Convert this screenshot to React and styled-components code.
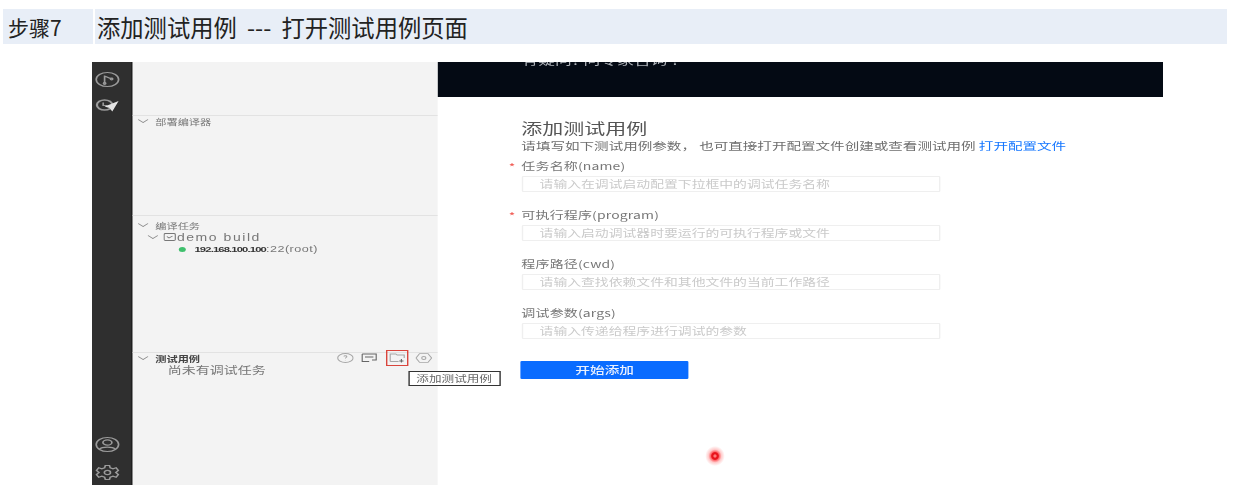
import React from "react";
import styled, { createGlobalStyle } from "styled-components";

const GlobalStyle = createGlobalStyle`
  html, body {
    margin: 0;
    padding: 0;
    background: #ffffff;
    overflow: hidden;
  }
  body {
    font-family: "Noto Sans CJK SC", "Noto Sans", sans-serif;
  }
`;

const Page = styled.div`
  width: 1233px;
  height: 499px;
  padding-top: 9px;
  box-sizing: border-box;
`;

const StepRow = styled.div`
  display: flex;
  gap: 2px;
  height: 35px;
  margin: 0 6px 18px 3px;
  color: #222;
`;

const StepCell = styled.div`
  background: #e8eef7;
  display: flex;
  align-items: center;
  padding-left: ${(p) => p.$pad}px;
  width: ${(p) => (p.$w ? `${p.$w}px` : "auto")};
  flex: ${(p) => (p.$w ? "none" : "1")};
  font-size: ${(p) => p.$size}px;
  word-spacing: ${(p) => p.$words || 0}px;
  white-space: pre;
  box-sizing: border-box;
`;

/* the shot in the reference is stretched sideways, so lay it out at its own size and stretch it */
const Shot = styled.div`
  display: flex;
  width: 765px;
  height: 423px;
  margin-left: 92px;
  transform: scaleX(1.4);
  transform-origin: 0 0;
  filter: blur(0.5px);
  overflow: hidden;
`;

const Rail = styled.div`
  width: 29.2px;
  flex: none;
  background: #2f2f2f;
  border-right: 1px solid #1c1c1c;
  box-sizing: border-box;
  display: flex;
  flex-direction: column;
  align-items: center;
  padding: 9px 7px 4px 0;
  color: #9a9a9a;
`;

const RailSpacer = styled.div`
  flex: 1;
`;

const RailIcon = styled.svg`
  width: 18px;
  height: ${(p) => p.$h || 17}px;
  margin-bottom: ${(p) => p.$gap || 0}px;
  flex: none;
  fill: none;
  stroke: currentColor;
  stroke-width: 1.2;
`;

const Panel = styled.aside`
  position: relative;
  width: 217.5px;
  flex: none;
  background: #f3f3f3;
  display: flex;
  flex-direction: column;
`;

const PanelSection = styled.section`
  height: ${(p) => p.$h}px;
  flex: ${(p) => (p.$h ? "none" : "1")};
  border-bottom: ${(p) => (p.$last ? "none" : "1px solid #e2e2e2")};
  box-sizing: border-box;
  padding-top: ${(p) => p.$top || 0}px;
`;

const SectionHead = styled.div`
  display: flex;
  align-items: center;
  height: 10px;
  margin-bottom: ${(p) => (p.$tight ? 1 : 2)}px;
  padding-left: 3px;
  font-size: 8px;
  font-weight: ${(p) => (p.$strong ? 700 : 400)};
  color: ${(p) => (p.$strong ? "#444" : "#777")};
`;

const Chevron = styled.svg`
  width: 9px;
  height: 6px;
  margin-right: 4px;
  flex: none;
  fill: none;
  stroke: #8a8a8a;
  stroke-width: 0.8;
`;

const TreeRow = styled.div`
  display: flex;
  align-items: center;
  height: 12px;
  padding-left: ${(p) => p.$indent}px;
  font-size: 10px;
  color: #777;
  font-family: "Liberation Sans", sans-serif;
  white-space: nowrap;
`;

const BuildLabel = styled.span`
  letter-spacing: 1.1px;
`;

const BuildIcon = styled.svg`
  width: 9px;
  height: 8px;
  margin-left: -1.5px;
  margin-right: 1px;
  fill: none;
  stroke: #777;
  stroke-width: 0.8;
`;

const StatusDot = styled.span`
  width: 5px;
  height: 5px;
  border-radius: 50%;
  background: #3fc06d;
  margin-right: 6px;
`;

const Host = styled.span`
  font-size: 8px;
  font-weight: 700;
  letter-spacing: -0.6px;
  color: #333;
`;

const HostPort = styled.span`
  font-size: 9px;
  letter-spacing: 0.35px;
  color: #777;
`;

const EmptyHint = styled.div`
  padding-left: 25px;
  height: 10px;
  line-height: 10px;
  font-size: 10px;
  color: #777;
`;

const HeadTools = styled.div`
  margin-left: auto;
  display: flex;
  align-items: center;
  color: #a6a6a6;
  padding-right: 4px;
`;

const ToolIcon = styled.svg`
  width: 12px;
  height: 10px;
  margin-left: ${(p) => p.$gap || 0}px;
  fill: none;
  stroke: ${(p) => (p.$dark ? "#666" : "currentColor")};
  stroke-width: 0.8;
`;

const ToolFocus = styled.div`
  width: 16px;
  height: 16px;
  margin-left: 5.5px;
  margin-right: 3px;
  border: 1px solid #d9453c;
  box-sizing: border-box;
  display: flex;
  align-items: center;
  justify-content: center;
`;

const Tooltip = styled.div`
  position: absolute;
  left: 196.5px;
  top: 309px;
  width: 66px;
  height: 15px;
  border: 1px solid #333;
  background: #fff;
  box-sizing: border-box;
  font-size: 9px;
  line-height: 13px;
  text-align: center;
  color: #666;
  white-space: nowrap;
  z-index: 2;
`;

const Main = styled.main`
  position: relative;
  flex: 1;
  min-width: 0;
  background: #fff;
`;

const Banner = styled.div`
  height: 35px;
  background: #040a14;
  overflow: hidden;
  padding-left: 60px;
  color: #aeb2b8;
  font-size: 12px;
  line-height: 14px;
`;

const BannerText = styled.div`
  margin-top: -9px;
`;

const Form = styled.div`
  padding: 22px 0 0 60px;
`;

const FormTitle = styled.h2`
  margin: 0 0 2px;
  font-size: 15px;
  line-height: 18px;
  font-weight: 400;
  color: #555;
`;

const FormIntro = styled.p`
  margin: 0 0 7px;
  font-size: 10.4px;
  line-height: 14px;
  color: #6e6e6e;
  white-space: nowrap;
`;

const OpenLink = styled.a`
  color: #1677ff;
`;

const Fields = styled.div`
  display: flex;
  flex-direction: column;
  gap: 17px;
`;

const Field = styled.div`
  display: flex;
  flex-direction: column;
  gap: 4px;
  width: 299px;
`;

const FieldLabel = styled.label`
  position: relative;
  font-size: 10px;
  line-height: 12px;
  color: #777;
  letter-spacing: 0.1px;
  white-space: nowrap;
`;

const Required = styled.span`
  position: absolute;
  left: -9px;
  top: 1px;
  color: #f0524a;
`;

const FieldInput = styled.div`
  height: 16px;
  border: 1px solid #efefef;
  border-radius: 1px;
  box-sizing: border-box;
  padding-left: 12px;
  font-size: 9.9px;
  line-height: 14px;
  color: #cacaca;
  white-space: nowrap;
`;

const SubmitButton = styled.div`
  width: 120px;
  height: 18px;
  margin-top: 22px;
  margin-left: -0.5px;
  border-radius: 1px;
  background: #0a6cff;
  color: #e8f0ff;
  font-size: 10.5px;
  font-weight: 500;
  line-height: 18px;
  text-align: center;
`;

const PointerDot = styled.div`
  position: absolute;
  left: 191px;
  top: 384px;
  width: 14px;
  height: 20px;
  background: radial-gradient(closest-side, #ff7a7a 0 10%, #e8141c 22% 34%, #ff6a6e 44%, rgba(255, 140, 140, 0.45) 66%, rgba(255, 255, 255, 0) 100%);
`;

const fields = [
  { label: "任务名称(name)", hint: "请输入在调试启动配置下拉框中的调试任务名称", required: true },
  { label: "可执行程序(program)", hint: "请输入启动调试器时要运行的可执行程序或文件", required: true },
  { label: "程序路径(cwd)", hint: "请输入查找依赖文件和其他文件的当前工作路径" },
  { label: "调试参数(args)", hint: "请输入传递给程序进行调试的参数" },
];

const Caret = () => (
  <Chevron viewBox="0 0 9 6">
    <path d="M1 1.5 L4.5 4.5 L8 1.5" />
  </Chevron>
);

const App = () => {
  return (
    <Page>
      <GlobalStyle />
      <StepRow>
        <StepCell $w={90} $pad={5} $size={21}>步骤7</StepCell>
        <StepCell $pad={2} $size={23.3} $words={5}>添加测试用例 --- 打开测试用例页面</StepCell>
      </StepRow>

      <Shot>
        <Rail>
          <RailIcon viewBox="0 0 18 17" $gap={10}>
            <ellipse cx="9" cy="8.5" rx="8" ry="7" />
            <path d="M7 4.5 V12.5 M7 5 L12 8" />
            <circle cx="7" cy="12.5" r="0.8" />
            <circle cx="12" cy="8" r="0.8" />
          </RailIcon>
          <RailIcon viewBox="0 0 18 15" $h={15}>
            <ellipse cx="7" cy="7" rx="5.5" ry="5" strokeWidth="1.6" />
            <path d="M6 4.5 V7.5 H9" />
            <path d="M7 8.5 L17 3 L12.5 13.5 L10.5 10 Z" fill="#e4e4e4" stroke="none" />
          </RailIcon>
          <RailSpacer />
          <RailIcon viewBox="0 0 18 17" $gap={11}>
            <ellipse cx="9" cy="8.5" rx="8" ry="7" />
            <ellipse cx="9" cy="6.5" rx="3.2" ry="2.6" />
            <path d="M3.5 13 C5 10.5 13 10.5 14.5 13" />
          </RailIcon>
          <RailIcon viewBox="0 0 18 17">
            <path d="M7.5 1.5 H10.5 L11 3.8 L13 4.8 L15.2 3.8 L16.8 6.5 L15 8.5 L16.8 10.5 L15.2 13.2 L13 12.2 L11 13.2 L10.5 15.5 H7.5 L7 13.2 L5 12.2 L2.8 13.2 L1.2 10.5 L3 8.5 L1.2 6.5 L2.8 3.8 L5 4.8 L7 3.8 Z" />
            <circle cx="9" cy="8.5" r="2.2" />
          </RailIcon>
        </Rail>

        <Panel>
          <PanelSection $h={54} />
          <PanelSection $h={100}>
            <SectionHead>
              <Caret />
              部署编译器
            </SectionHead>
          </PanelSection>
          <PanelSection $h={137} $top={4}>
            <SectionHead $tight>
              <Caret />
              编译任务
            </SectionHead>
            <TreeRow $indent={10}>
              <Caret />
              <BuildIcon viewBox="0 0 9 8">
                <rect x="0.5" y="0.5" width="8" height="7" rx="1" />
                <path d="M2.5 3.5 L4 5 L6.5 3" />
              </BuildIcon>
              <BuildLabel>demo build</BuildLabel>
            </TreeRow>
            <TreeRow $indent={33}>
              <StatusDot />
              <Host>192.168.100.100</Host>
              <HostPort>:22(root)</HostPort>
            </TreeRow>
          </PanelSection>
          <PanelSection $last>
            <SectionHead $strong>
              <Caret />
              测试用例
              <HeadTools>
                <ToolIcon viewBox="0 0 12 10">
                  <ellipse cx="6" cy="5" rx="5.5" ry="4.5" />
                  <path d="M5 3.5 C5 2.5 7 2.5 7 3.5 C7 4.5 6 4.5 6 5.5 M6 7 V7.3" />
                </ToolIcon>
                <ToolIcon viewBox="0 0 12 10" $gap={5} $dark>
                  <path d="M1 1 H11 V7 H8 M1 1 V8.5 H6" />
                  <path d="M3 4 H9" />
                </ToolIcon>
                <ToolFocus>
                  <ToolIcon viewBox="0 0 12 10">
                    <path d="M1 8.5 V1 H5 L6 2 H11 V5 M1 8.5 H7" />
                    <path d="M9 6 V9.5 M7.5 8 H10.5" stroke="#666" />
                  </ToolIcon>
                </ToolFocus>
                <ToolIcon viewBox="0 0 12 10" $gap={2}>
                  <path d="M3 0.6 H9 L11.6 5 L9 9.4 H3 L0.4 5 Z" />
                  <circle cx="6" cy="5" r="1.5" />
                </ToolIcon>
              </HeadTools>
            </SectionHead>
            <EmptyHint>尚未有调试任务</EmptyHint>
          </PanelSection>
          <Tooltip>添加测试用例</Tooltip>
        </Panel>

        <Main>
          <Banner>
            <BannerText>有疑问? 问专家咨询 ?</BannerText>
          </Banner>
          <Form>
            <FormTitle>添加测试用例</FormTitle>
            <FormIntro>
              请填写如下测试用例参数， 也可直接打开配置文件创建或查看测试用例 <OpenLink>打开配置文件</OpenLink>
            </FormIntro>
            <Fields>
              {fields.map((f) => (
                <Field key={f.label}>
                  <FieldLabel>
                    {f.required && <Required>*</Required>}
                    {f.label}
                  </FieldLabel>
                  <FieldInput>{f.hint}</FieldInput>
                </Field>
              ))}
            </Fields>
            <SubmitButton>开始添加</SubmitButton>
          </Form>
          <PointerDot />
        </Main>
      </Shot>
    </Page>
  );
};

export default App;
